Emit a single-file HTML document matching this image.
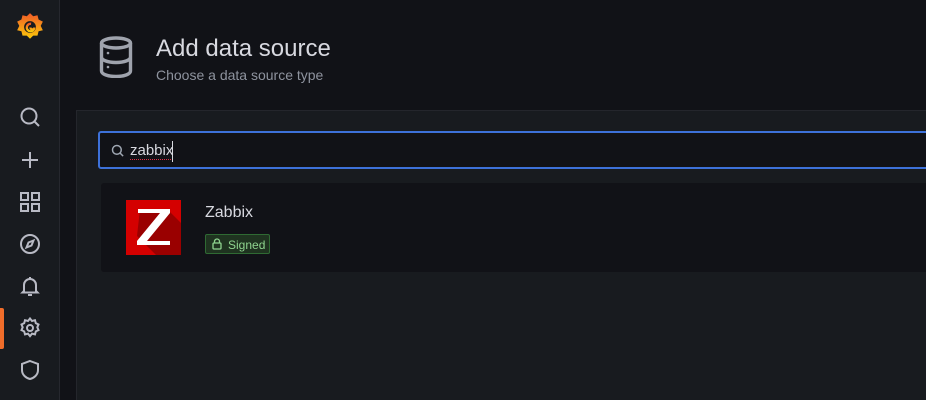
<!DOCTYPE html>
<html><head><style>
*{box-sizing:border-box;margin:0;padding:0}
html,body{width:926px;height:400px;overflow:hidden}
body{background:#111217;font-family:"Liberation Sans",Arial,sans-serif;position:relative}
.side{position:absolute;left:0;top:0;width:60px;height:400px;background:#181b1f;border-right:1px solid #26282e}
.ic{position:absolute;left:18px;width:24px;height:24px}
.panel{position:absolute;left:76px;top:110px;width:860px;height:290px;background:#181b1f;border-left:1px solid #24262c;border-top:1px solid #24262c}
.search{position:absolute;left:98px;top:131px;width:840px;height:38px;border:2px solid #3d71d9;border-radius:3px;background:#111217}
.card{position:absolute;left:101px;top:183px;width:830px;height:89px;background:#111217;border-radius:3px}
</style></head><body>
<div class="side">
<svg style="position:absolute;left:16px;top:12px" width="28" height="30" viewBox="0 0 26 28"><defs><linearGradient id="g" x1="0" y1="1" x2="0" y2="0"><stop offset="0" stop-color="#fbca0a"/><stop offset="1" stop-color="#f05a28"/></linearGradient></defs>
<path d="M13 1l3 3 4-1 1 4 4 2-2 4 2 4-4 1-1 4-4 0-3 3-3-3-4 0-1-4-4-1 2-4-2-4 4-2 1-4 4 1z" fill="url(#g)"/>
<circle cx="13" cy="14" r="5.5" fill="#181b1f"/><path d="M14 11a3.5 3.5 0 1 0 3 3.5a1.8 1.8 0 0 1-3.6 0" stroke="url(#g)" stroke-width="2.2" fill="none"/></svg>
<svg class="ic" style="top:105px" viewBox="0 0 24 24" fill="none" stroke="#b8bac4" stroke-width="2"><circle cx="11" cy="11" r="7.5"/><path d="M16.5 16.5l4.5 4.5"/></svg>
<svg class="ic" style="top:148px" viewBox="0 0 24 24" fill="none" stroke="#b8bac4" stroke-width="2"><path d="M12 4v16M4 12h16"/></svg>
<svg class="ic" style="top:190px" viewBox="0 0 24 24" fill="none" stroke="#b8bac4" stroke-width="2"><rect x="3" y="3" width="7" height="7"/><rect x="14" y="3" width="7" height="7"/><rect x="3" y="14" width="7" height="7"/><rect x="14" y="14" width="7" height="7"/></svg>
<svg class="ic" style="top:232px" viewBox="0 0 24 24" fill="none" stroke="#b8bac4" stroke-width="2"><circle cx="12" cy="12" r="9"/><path d="M15.5 8.5l-2 5-5 2 2-5z"/></svg>
<svg class="ic" style="top:274px" viewBox="0 0 24 24" fill="none" stroke="#b8bac4" stroke-width="2"><path d="M6 17V11a6 6 0 0 1 12 0v6l1.5 1.5h-15z"/><path d="M10 21h4M12 3v2"/></svg>
<div style="position:absolute;left:0;top:308px;width:4px;height:41px;background:#f06d2a;border-radius:0 2px 2px 0"></div>
<svg class="ic" style="top:316px" viewBox="0 0 24 24" fill="none" stroke="#b8bac4" stroke-width="2"><circle cx="12" cy="12" r="3"/><path d="M12 2.5l2 2.5 3-.8.8 3 2.7 1.3-1.2 2.8 1.2 2.8-2.7 1.3-.8 3-3-.8-2 2.5-2-2.5-3 .8-.8-3-2.7-1.3 1.2-2.8-1.2-2.8 2.7-1.3.8-3 3 .8z"/></svg>
<svg class="ic" style="top:358px" viewBox="0 0 24 24" fill="none" stroke="#b8bac4" stroke-width="2"><path d="M12 3l8 3v6c0 5-4 8-8 9-4-1-8-4-8-9V6z"/></svg>
</div>
<svg style="position:absolute;left:99px;top:36px" width="34" height="42" viewBox="0 0 34 42" fill="none" stroke="#9fa3ad" stroke-width="3.4"><ellipse cx="17" cy="7" rx="14.5" ry="5"/><path d="M2.5 7v28c0 3 6 5.5 14.5 5.5S31.5 38 31.5 35V7M2.5 21c0 3 6 5.5 14.5 5.5S31.5 24 31.5 21"/><circle cx="9" cy="17" r="1.3" fill="#9fa3ad" stroke="none"/><circle cx="9" cy="31" r="1.3" fill="#9fa3ad" stroke="none"/></svg>
<div style="position:absolute;left:156px;top:35px;font-size:24px;color:#d8d9e0">Add data source</div>
<div style="position:absolute;left:156px;top:67px;font-size:14px;color:#8e939e">Choose a data source type</div>
<div class="panel"></div>
<div class="search">
<svg style="position:absolute;left:10px;top:10px" width="15" height="15" viewBox="0 0 24 24" fill="none" stroke="#9fa7b3" stroke-width="2.4"><circle cx="11" cy="11" r="7"/><path d="M16 16l5 5"/></svg>
<div style="position:absolute;left:30px;top:9px;font-size:15px;color:#d8d9e0;border-bottom:1px dotted #e02f44;line-height:17px">zabbix</div>
<div style="position:absolute;left:72px;top:8px;width:1px;height:21px;background:#d8d9e0"></div>
</div>
<div class="card">
<svg style="position:absolute;left:25px;top:17px" width="55" height="55" viewBox="0 0 55 55"><rect width="55" height="55" fill="#d40000"/><path d="M14 9h27l14 14v32H30L11 36z" fill="#9a0000"/><path d="M12 9h32v4L21 41h23v4H11v-4l23-28H12z" fill="#fff"/></svg>
<div style="position:absolute;left:104px;top:21px;font-size:16px;color:#d8d9e0">Zabbix</div>
<div style="position:absolute;left:104px;top:51px;width:65px;height:20px;border:1px solid #2f6a33;background:#1f3320;border-radius:2px;font-size:12px;color:#8fd48f;padding:3px 0 0 22px">Signed
<svg style="position:absolute;left:6px;top:3px" width="10" height="12" viewBox="0 0 10 12" fill="none" stroke="#8fd48f" stroke-width="1.3"><rect x="1" y="5" width="8" height="6" rx="1"/><path d="M2.5 5V3.5a2.5 2.5 0 0 1 5 0V5"/></svg></div>
</div>
</body></html>
